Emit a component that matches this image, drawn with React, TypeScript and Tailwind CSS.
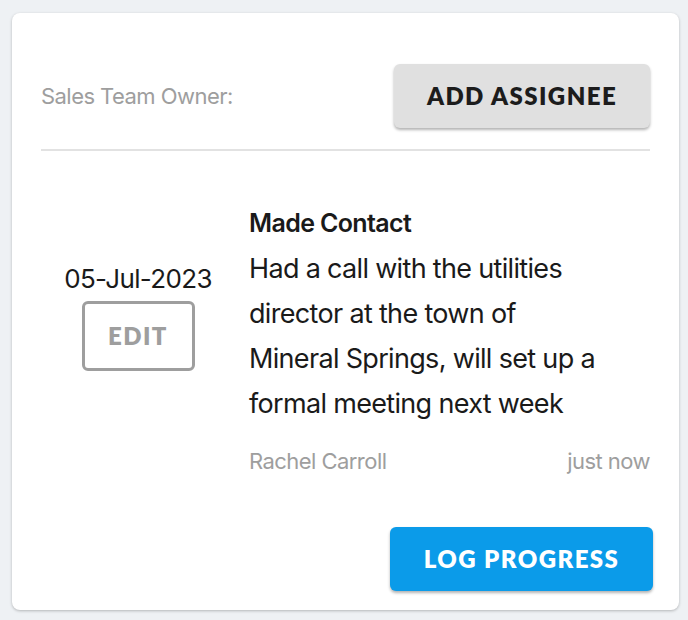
import React from 'react';

const sans = { fontFamily: 'Inter, "Liberation Sans", sans-serif' };
const btnFont = { fontFamily: 'Lato, "Liberation Sans", sans-serif' };

const App: React.FC = () => {
  return (
    <div className="min-h-screen w-full bg-[#eef1f4] pt-[13px] pl-[12px]">
      <div
        className="w-[667px] h-[597px] bg-white rounded-lg shadow-[0_1px_3px_rgba(0,0,0,0.25)] px-[29px] pt-[51px] flex flex-col"
        style={sans}
      >
        <div className="flex items-center justify-between">
          <span className="text-[22px] text-[#9e9e9e] tracking-tight">Sales Team Owner:</span>
          <button
            className="h-[64px] w-[256px] bg-[#e0e0e0] rounded-md shadow-[0_2px_3px_rgba(0,0,0,0.3)] text-[24px] font-extrabold text-[#1c1c1c] tracking-[0.06em]"
            style={btnFont}
          >
            ADD ASSIGNEE
          </button>
        </div>
        <div className="mt-[21px] h-[2px] bg-[#e2e2e2]" />

        <div className="mt-[50px] flex items-center">
          <div className="w-[194px] pt-[7px] flex flex-col items-center">
            <span className="text-[26px] leading-[30px] text-[#1a1a1a] tracking-tight">05-Jul-2023</span>
            <button
              className="mt-[7px] w-[113px] h-[70px] border-[3px] border-[#9e9e9e] rounded-md text-[24px] font-extrabold text-[#9e9e9e] tracking-[0.06em]"
              style={btnFont}
            >
              EDIT
            </button>
          </div>
          <div className="ml-[14px] flex-1">
            <div className="text-[25px] font-semibold text-[#1a1a1a] tracking-tight leading-[45px]">Made Contact</div>
            <p className="text-[27px] text-[#1a1a1a] tracking-tight leading-[45px] w-[360px]">
              Had a call with the utilities director at the town of Mineral Springs, will set up a formal meeting next week
            </p>
          </div>
        </div>

        <div className="mt-[20px] ml-[208px] flex justify-between text-[22px] leading-[30px] text-[#9e9e9e] tracking-tight">
          <span>Rachel Carroll</span>
          <span>just now</span>
        </div>

        <div className="mt-[51px] flex justify-end">
          <button
            className="h-[64px] w-[263px] bg-[#0b9be9] rounded-md shadow-[0_2px_3px_rgba(0,0,0,0.3)] text-[24px] font-extrabold text-white tracking-[0.06em] mr-[-3px]"
            style={btnFont}
          >
            LOG PROGRESS
          </button>
        </div>
      </div>
    </div>
  );
};

export default App;
